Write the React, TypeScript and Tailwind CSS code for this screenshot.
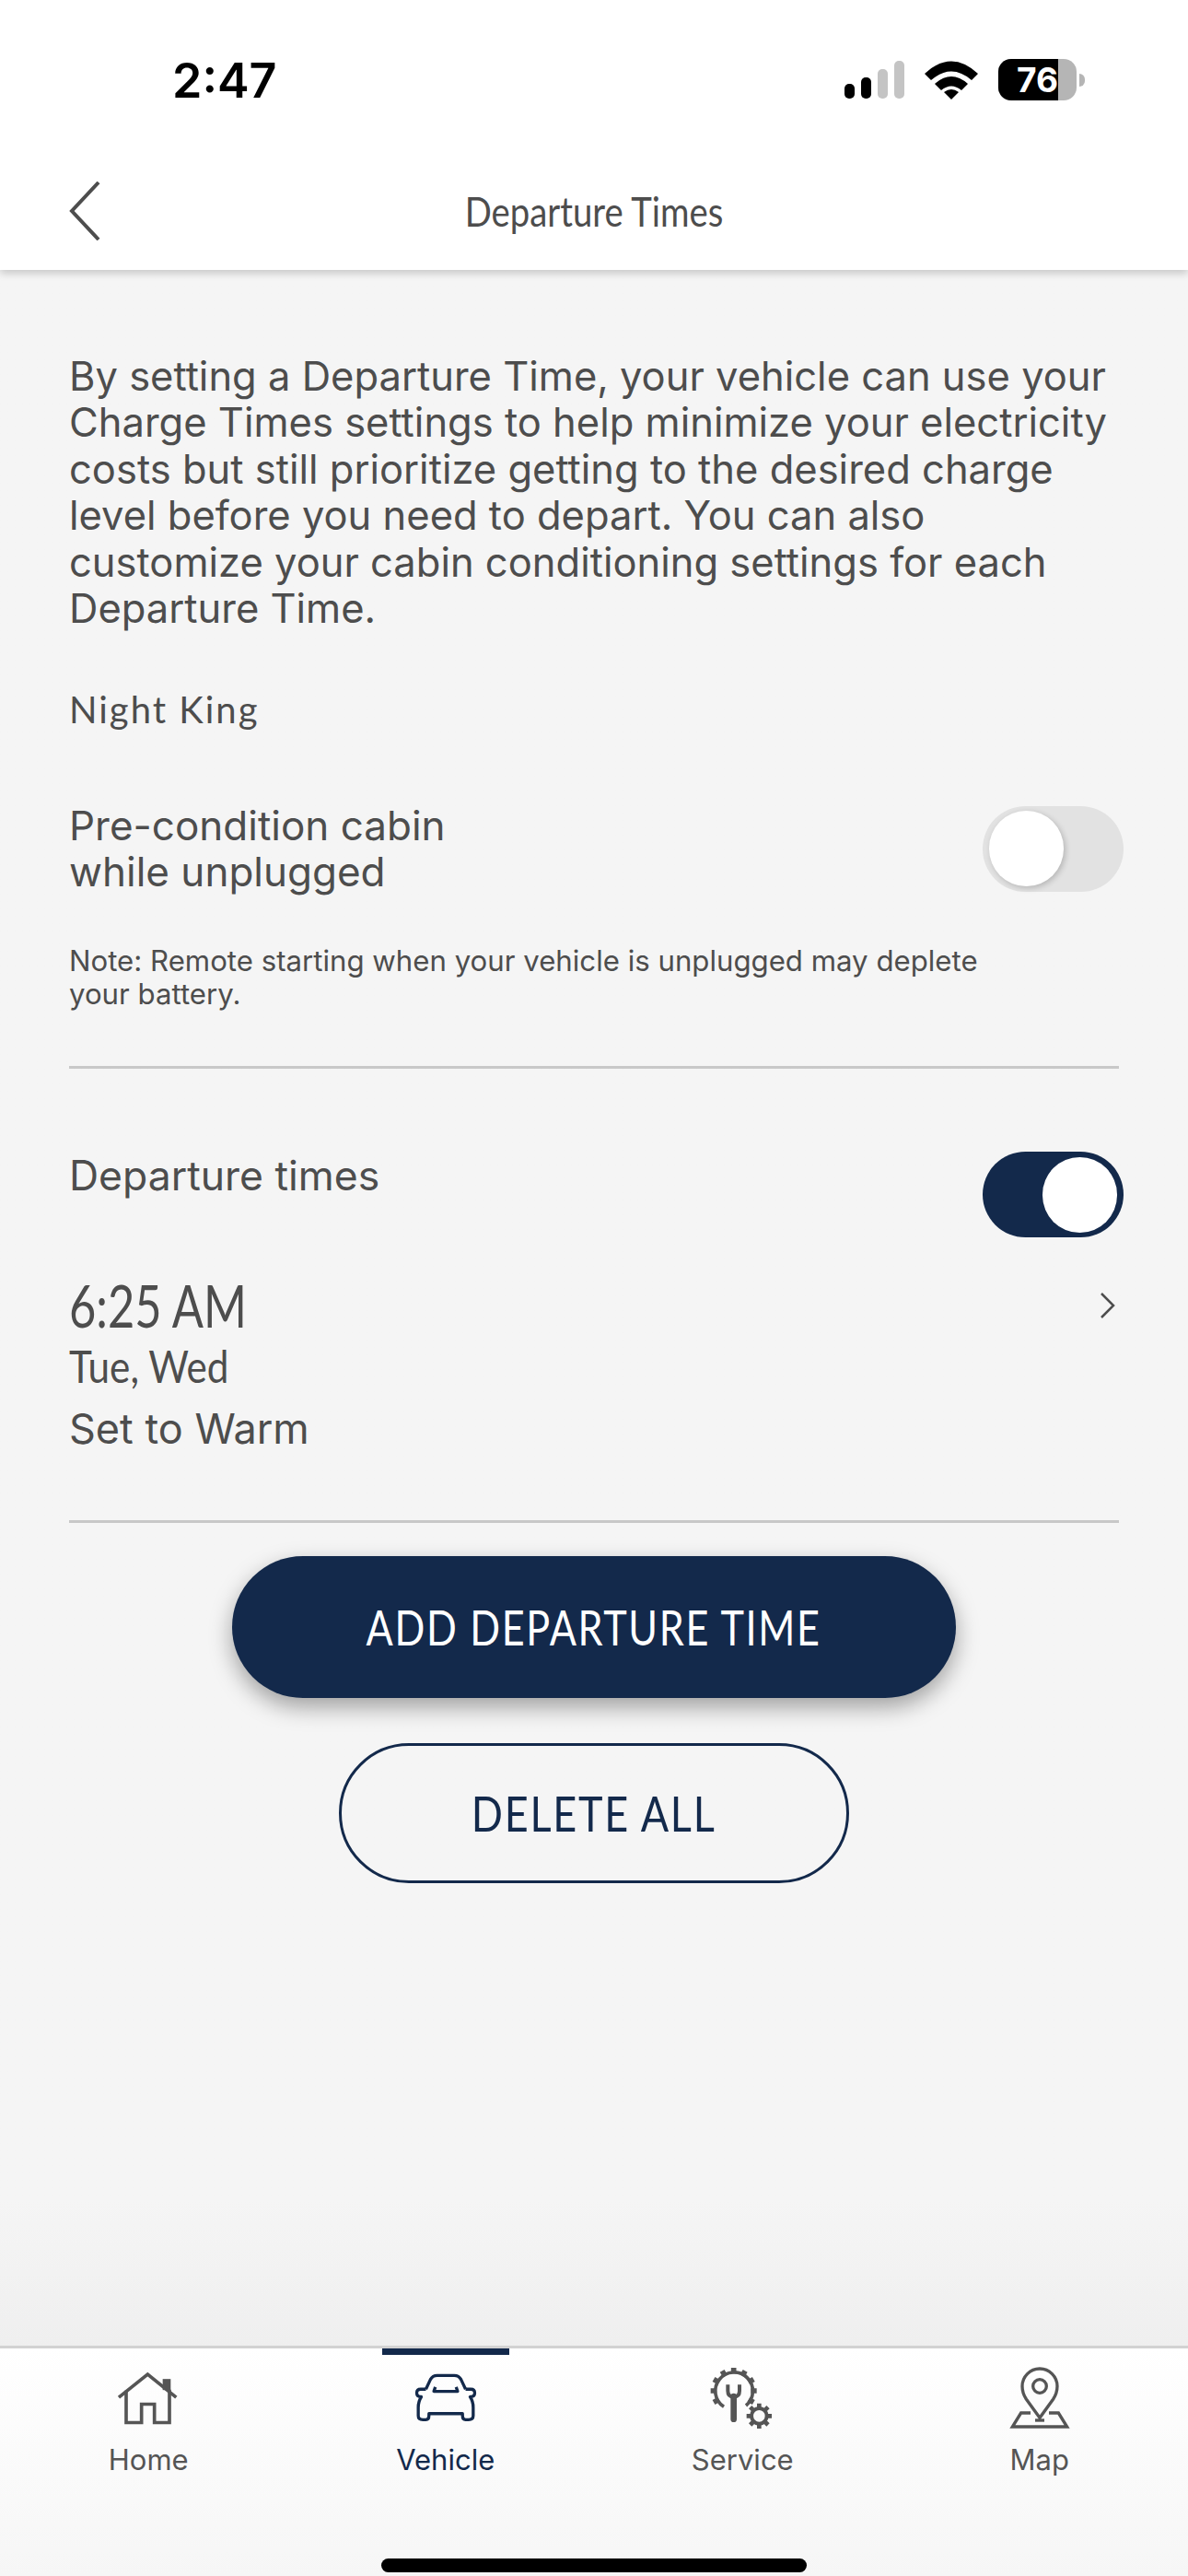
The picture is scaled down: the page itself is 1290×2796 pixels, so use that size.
const navy = "#13294b";

function Toggle({ on }: { on: boolean }) {
  return (
    <div className={`flex h-[93px] w-[153px] shrink-0 items-center rounded-full px-[7px] ${on ? "justify-end bg-[#13294b]" : "justify-start bg-[#e2e2e2]"}`}>
      <div className={`h-[82px] w-[81px] rounded-full bg-white ${on ? "" : "shadow-[2px_2px_6px_rgba(0,0,0,0.2)]"}`} />
    </div>
  );
}

function Signal() {
  return (
    <svg width="65" height="41" viewBox="0 0 65 41" className="shrink-0">
      <rect x="0" y="25" width="11" height="16" rx="5" fill="#000" />
      <rect x="18" y="18" width="11" height="23" rx="5" fill="#000" />
      <rect x="36" y="9" width="11" height="32" rx="5" fill="#c4c4c4" />
      <rect x="54" y="0" width="11" height="41" rx="5" fill="#c4c4c4" />
    </svg>
  );
}

function Wifi() {
  return (
    <svg width="58" height="42" viewBox="0 0 58 42" className="shrink-0">
      <path d="M0 14 Q29 -13 58 14 L51 21 Q29 2 7 21 Z" fill="#000" />
      <path d="M11 25 Q29 9 47 25 L40 32 Q29 23 18 32 Z" fill="#000" />
      <path d="M21 34 Q29 28 37 34 L29 42 Z" fill="#000" />
    </svg>
  );
}

function Battery() {
  return (
    <div className="flex items-center">
      <div className="flex h-[45px] w-[85px] overflow-hidden rounded-[14px] bg-[#b5b5b5]">
        <div className="flex w-[65px] items-center justify-end bg-black font-['Inter',sans-serif] text-[37px] font-bold leading-none text-white">
          76
        </div>
      </div>
      <div className="ml-[3px] h-[14px] w-[6px] rounded-r-full bg-[#b5b5b5]" />
    </div>
  );
}

function HomeIcon() {
  return (
    <svg width="70" height="62" viewBox="110 100 210 185" fill="none" stroke="#555" strokeWidth="11" className="-mt-[3px]">
      <path d="M119 190 L213 115 L306 190" />
      <path d="M143 168 V272 H193 V212 H235 V272 H284 V165" />
      <rect x="262" y="130" width="26" height="36" fill="#555" stroke="none" />
    </svg>
  );
}

function CarIcon() {
  return (
    <svg width="70" height="58" viewBox="1075 110 210 175" fill="none" stroke={navy} strokeWidth="10" strokeLinejoin="round">
      <path d="M1115 165 L1130 133 Q1137 120 1152 120 H1208 Q1223 120 1230 133 L1245 165" />
      <path d="M1115 165 H1098 Q1085 165 1085 177 Q1085 190 1100 190 Q1090 205 1090 225 V252 Q1090 265 1105 265 H1115 Q1125 265 1125 252 V245 H1235 V252 Q1235 265 1245 265 H1255 Q1270 265 1270 252 V225 Q1270 205 1260 190 Q1275 190 1275 177 Q1275 165 1262 165 H1245" />
      <path d="M1146 158 L1141 172 H1219 L1214 158" />
    </svg>
  );
}

function teeth(cx: number, cy: number, r1: number, r2: number, n: number, skip: (a: number) => boolean) {
  const out: string[] = [];
  for (let i = 0; i < n; i++) {
    const a = (i * 2 * Math.PI) / n - Math.PI / 2;
    if (skip(a)) continue;
    out.push(`M${cx + r1 * Math.cos(a)} ${cy + r1 * Math.sin(a)} L${cx + r2 * Math.cos(a)} ${cy + r2 * Math.sin(a)}`);
  }
  return out.join(" ");
}

function ServiceIcon() {
  const bigTeeth = teeth(232, 168, 56, 75, 12, (a) => {
    const d = ((a * 180) / Math.PI + 360) % 360;
    return d > 40 && d < 130;
  });
  const smallTeeth = teeth(315, 250, 22, 41, 8, () => false);
  return (
    <svg width="70" height="70" viewBox="155 90 210 210" fill="none" stroke="#555" strokeWidth="11">
      <path d="M200 220 A61 61 0 1 1 272 216" />
      <path d={bigTeeth} strokeWidth="17" />
      <circle cx="315" cy="250" r="25" strokeWidth="12" />
      <path d={smallTeeth} strokeWidth="14" />
      <path d="M213 148 V168 Q213 188 232 188 Q251 188 251 168 V148" strokeWidth="12" />
      <path d="M232 186 V260" strokeWidth="20" strokeLinecap="round" />
    </svg>
  );
}

function MapIcon() {
  return (
    <svg width="70" height="70" viewBox="1122 90 210 210" fill="none" stroke="#555" strokeWidth="10">
      <path d="M1227 256 L1183 195 Q1170 175 1170 153 A57 57 0 0 1 1284 153 Q1284 175 1271 195 Z" />
      <circle cx="1227" cy="153" r="22" />
      <path d="M1212 264 H1242" />
      <path d="M1197 240 H1166 L1138 285 H1316 L1288 240 H1257" />
    </svg>
  );
}

function Tab({ label, active, children }: { label: string; active?: boolean; children: React.ReactNode }) {
  return (
    <div className="flex w-[322.5px] flex-col items-center">
      <div className="flex h-[7px] w-full justify-center">
        {active && <div className="h-[7px] w-[138px] bg-[#13294b]" />}
      </div>
      <div className="mt-[11px] flex h-[74px] items-center justify-center">{children}</div>
      <div className={`mt-[9px] font-['Inter',sans-serif] text-[31px] leading-[40px] ${active ? "text-[#13294b]" : "text-[#555]"}`}>
        {label}
      </div>
    </div>
  );
}

const Divider = ({ className }: { className: string }) => (
  <div className={`mr-[5px] h-[3px] bg-[#c8c8c8] ${className}`} />
);

export default function App() {
  return (
    <div className="flex h-[2796px] w-[1290px] flex-col overflow-hidden bg-[#f5f5f5] font-['Inter',sans-serif] text-[#4d4d4d]">
      <header className="relative z-10 h-[293px] bg-white shadow-[0_4px_8px_rgba(0,0,0,0.18)]">
        <div className="flex items-start justify-between pl-[187px] pr-[112px] pt-[64px]">
          <div className="mt-[2px] text-[52px] font-semibold leading-[44px] text-black">2:47</div>
          <div className="flex items-center gap-[22px]">
            <Signal />
            <Wifi />
            <Battery />
          </div>
        </div>
        <div className="mt-[57px] flex h-[124px] items-center pl-[75px]">
          <svg width="34" height="64" viewBox="0 0 34 64" fill="none" stroke="#4d4d4d" strokeWidth="4" className="shrink-0">
            <path d="M32 1 L3 32 L32 63" />
          </svg>
          <div className="ml-[-109px] w-[1290px] scale-x-[0.87] text-center font-['Lato',sans-serif] text-[44px] leading-[50px]">Departure Times</div>
        </div>
      </header>

      <main className="flex-1 bg-gradient-to-b from-[#f5f5f5] from-93% to-[#efefef] pl-[75px] pr-[70px] pt-[90px]">
        <p className="text-[43.5px] leading-[50.4px]">
          By setting a Departure Time, your vehicle can use your
          <br />
          Charge Times settings to help minimize your electricity
          <br />
          costs but still prioritize getting to the desired charge
          <br />
          level before you need to depart. You can also
          <br />
          customize your cabin conditioning settings for each
          <br />
          Departure Time.
        </p>
        <div className="mt-[60px] font-['Lato',sans-serif] text-[40px] leading-[50px] tracking-[2px]">Night King</div>
        <div className="mt-[76px] flex items-center justify-between">
          <div className="text-[44px] leading-[50px]">
            Pre-condition cabin
            <br />
            while unplugged
          </div>
          <Toggle on={false} />
        </div>
        <p className="mt-[54px] text-[31.2px] leading-[36px]">
          Note: Remote starting when your vehicle is unplugged may deplete
          <br />
          your battery.
        </p>
        <Divider className="mt-[60px]" />
        <div className="mt-[90px] flex items-start justify-between">
          <div className="mt-[1px] text-[44.5px] leading-[50px]">Departure times</div>
          <Toggle on />
        </div>
        <div className="mt-[36px] flex items-start justify-between pr-[7px]">
          <div>
            <div className="origin-left scale-x-[0.79] font-['Lato',sans-serif] text-[64px] leading-[76px]">6:25 AM</div>
            <div className="origin-left scale-x-[0.88] font-['Lato',sans-serif] text-[48px] leading-[56px]">Tue, Wed</div>
            <div className="mt-[12px] text-[45px] leading-[56px]">Set to Warm</div>
          </div>
          <svg width="22" height="28" viewBox="0 0 22 28" fill="none" stroke="#4d4d4d" strokeWidth="2.5" className="mt-[24px]">
            <path d="M5 1 L18 14 L5 27" />
          </svg>
        </div>
        <Divider className="mt-[71px]" />
        <div className="mt-[36px] flex flex-col items-center pr-[5px]">
          <div className="flex h-[154px] w-[786px] items-center justify-center rounded-full bg-[#13294b] text-white shadow-[0_10px_24px_rgba(0,0,0,0.35)]">
            <span className="scale-x-[0.83] font-['Lato',sans-serif] text-[52px] tracking-[2px]">ADD DEPARTURE TIME</span>
          </div>
          <div className="mt-[49px] flex h-[152px] w-[554px] items-center justify-center rounded-full border-[3px] border-[#13294b] text-[#13294b]">
            <span className="scale-x-[0.865] font-['Lato',sans-serif] text-[52px] tracking-[2px]">DELETE ALL</span>
          </div>
        </div>
      </main>

      <nav className="h-[250px] border-t-[3px] border-[#d2d2d2] bg-gradient-to-b from-white to-[#f6f6f6]">
        <div className="flex">
          <Tab label="Home"><HomeIcon /></Tab>
          <Tab label="Vehicle" active><CarIcon /></Tab>
          <Tab label="Service"><ServiceIcon /></Tab>
          <Tab label="Map"><MapIcon /></Tab>
        </div>
        <div className="mx-auto mt-[87px] h-[15px] w-[462px] rounded-full bg-black" />
      </nav>
    </div>
  );
}
